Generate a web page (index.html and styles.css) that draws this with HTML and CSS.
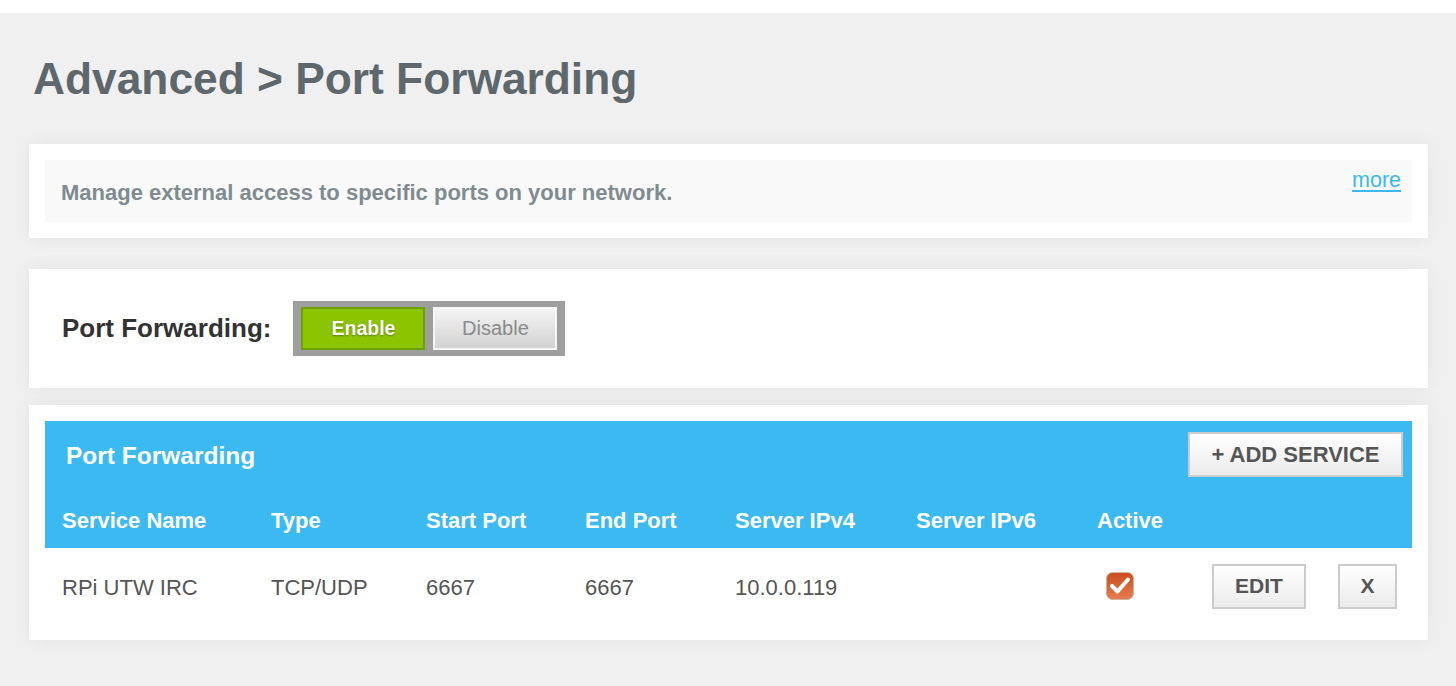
FILE: index.html
```html
<!DOCTYPE html>
<html>
<head>
<meta charset="utf-8">
<link rel="stylesheet" href="styles.css">
</head>
<body>
<div class="topbar"></div>
<main class="page">
  <h1 class="title">Advanced &gt; Port Forwarding</h1>

  <section class="card">
    <div class="info">
      <p class="info-text">Manage external access to specific ports on your network.</p>
      <a class="more" href="#">more</a>
    </div>
  </section>

  <section class="card card-toggle">
    <span class="toggle-label">Port Forwarding:</span>
    <div class="toggle">
      <button class="tbtn tbtn-on">Enable</button>
      <button class="tbtn tbtn-off">Disable</button>
    </div>
  </section>

  <section class="card card-table">
    <div class="tbl-head">
      <div class="tbl-title-row">
        <h2 class="tbl-title">Port Forwarding</h2>
        <button class="btn btn-add">+ ADD SERVICE</button>
      </div>
    </div>
    <table class="tbl">
      <colgroup>
        <col class="c1"><col class="c2"><col class="c3"><col class="c4"><col class="c5"><col class="c6"><col class="c7"><col class="c8"><col class="c9">
      </colgroup>
      <thead>
        <tr>
          <th>Service Name</th>
          <th>Type</th>
          <th>Start Port</th>
          <th>End Port</th>
          <th>Server IPv4</th>
          <th>Server IPv6</th>
          <th>Active</th>
          <th></th>
          <th></th>
        </tr>
      </thead>
      <tbody>
        <tr>
          <td class="td-text">RPi UTW IRC</td>
          <td class="td-text">TCP/UDP</td>
          <td class="td-text">6667</td>
          <td class="td-text">6667</td>
          <td class="td-text">10.0.0.119</td>
          <td></td>
          <td class="td-check">
            <svg class="check" width="30" height="30" viewBox="0 0 30 30">
              <defs>
                <linearGradient id="cg" x1="0" y1="0" x2="0" y2="1">
                  <stop offset="0" stop-color="#cd4d1c"/>
                  <stop offset="1" stop-color="#e47d52"/>
                </linearGradient>
              </defs>
              <rect x="1.5" y="1.5" width="27" height="27" rx="6" fill="url(#cg)" stroke="#d3b2a2" stroke-width="1"/>
              <path d="M7 15 L12.5 20.5 L23 8.5" fill="none" stroke="#ffffff" stroke-width="4" stroke-linecap="round" stroke-linejoin="round"/>
            </svg>
          </td>
          <td><button class="btn btn-edit">EDIT</button></td>
          <td><button class="btn btn-x">X</button></td>
        </tr>
      </tbody>
    </table>
  </section>
</main>
</body>
</html>
```
FILE: styles.css
```css
* { box-sizing: border-box; }

html, body {
  margin: 0;
  padding: 0;
  background: #f0f0f0;
  font-family: "Liberation Sans", Arial, sans-serif;
}

.topbar {
  height: 13px;
  background: #ffffff;
}

.page {
  padding: 0 28px 40px 29px;
}

.title {
  margin: 41px 0 40px 4px;
  font-size: 44.3px;
  line-height: 50px;
  font-weight: bold;
  color: #5d676c;
}

.card {
  background: #ffffff;
  padding: 16px;
  box-shadow: 0 0 18px rgba(0, 0, 0, 0.06);
}

.info {
  background: #f9f9f9;
  height: 62px;
  display: flex;
  justify-content: space-between;
  align-items: center;
  padding: 0 11px 0 16px;
}

.info-text {
  margin: 4px 0 0 0;
  font-size: 22px;
  font-weight: bold;
  color: #808b90;
}

.more {
  align-self: flex-start;
  margin-top: 8px;
  font-size: 21.5px;
  color: #3bb9ef;
  text-decoration: underline;
  text-underline-offset: 3px;
}

.card-toggle {
  margin-top: 31px;
  padding: 32px 33px;
  display: flex;
  align-items: center;
}

.toggle-label {
  font-size: 26px;
  font-weight: bold;
  color: #333333;
  margin-right: 22px;
}

.toggle {
  display: flex;
  gap: 8px;
  background: #9e9e9e;
  padding: 6px 8px;
}

.tbtn {
  width: 124px;
  height: 43px;
  font-family: "Liberation Sans", Arial, sans-serif;
  font-size: 19.5px;
  cursor: pointer;
}

.tbtn-on {
  background: #8dc400;
  border: 2px solid #6ca300;
  color: #ffffff;
  font-weight: bold;
  text-shadow: 0 1px 2px rgba(0, 0, 0, 0.35);
}

.tbtn-off {
  background: linear-gradient(#f4f4f4, #d2d2d2);
  border: 2px solid #f6f6f6;
  color: #8a8a8a;
  font-size: 20px;
}

.card-table {
  margin-top: 17px;
}

.tbl-head {
  background: #3bbaf1;
  padding: 11px 9px 0 21px;
}

.tbl-title-row {
  display: flex;
  justify-content: space-between;
  align-items: center;
  height: 45px;
}

.tbl-title {
  margin: 2px 0 0 0;
  font-size: 24.5px;
  font-weight: bold;
  color: #ffffff;
}

.btn {
  font-family: "Liberation Sans", Arial, sans-serif;
  font-weight: bold;
  color: #555555;
  background: linear-gradient(#ffffff, #ebebeb);
  border: 2px solid #cccccc;
  height: 45px;
  cursor: pointer;
}

.btn-add {
  width: 215px;
  font-size: 22px;
}

.tbl {
  width: 100%;
  border-collapse: collapse;
  table-layout: fixed;
}

.c1 { width: 209px; }
.c2 { width: 155px; }
.c3 { width: 159px; }
.c4 { width: 150px; }
.c5 { width: 181px; }
.c6 { width: 181px; }
.c7 { width: 115px; }
.c8 { width: 126px; }
.c9 { width: auto; }

.tbl th {
  background: #3bbaf1;
  color: #ffffff;
  font-size: 22px;
  font-weight: bold;
  text-align: left;
  height: 71px;
  padding: 17px 0 0 17px;
}

.tbl td {
  height: 76px;
  padding: 0 0 0 17px;
  font-size: 22px;
  color: #555555;
  vertical-align: middle;
}

.tbl td.td-text {
  padding-top: 3px;
}

.td-check .check {
  display: block;
  margin-left: 8px;
}

.btn-edit {
  width: 94px;
  font-size: 21px;
}

.btn-x {
  width: 59px;
  font-size: 21px;
}
```
